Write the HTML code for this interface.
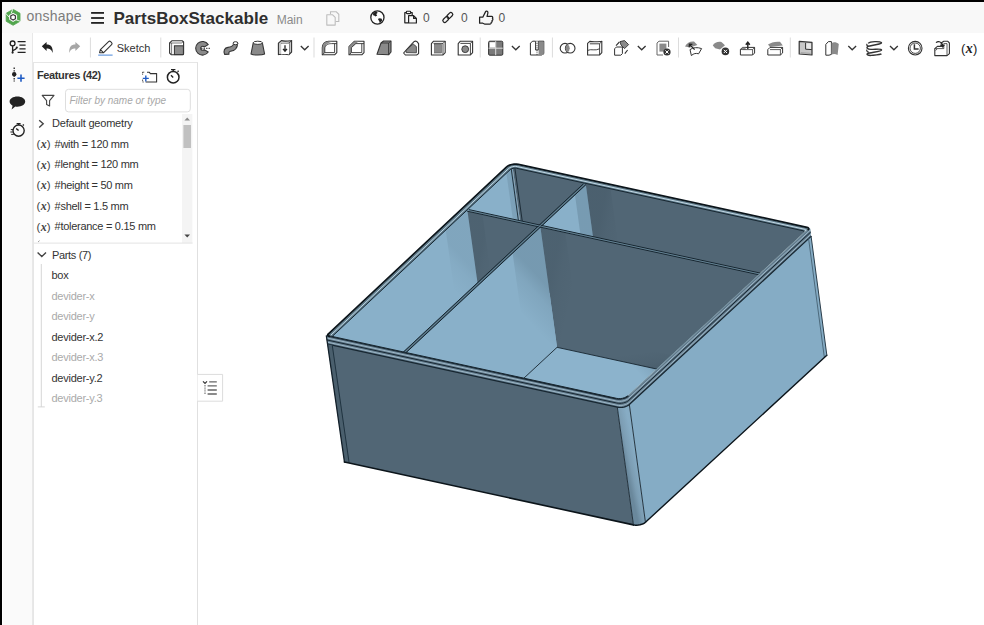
<!DOCTYPE html>
<html><head><meta charset="utf-8">
<style>
*{box-sizing:border-box;margin:0;padding:0}
html,body{width:984px;height:625px;overflow:hidden;background:#fff;font-family:"Liberation Sans",sans-serif;color:#333}
.abs{position:absolute}
#topbar{left:0;top:0;width:984px;height:2px;background:#000}
#leftbar{left:0;top:0;width:2px;height:625px;background:#000}
#header{left:2px;top:2px;width:982px;height:31px;background:#f8f8f8}
#rail{left:3px;top:33px;width:30px;height:592px;background:#fafafa;border-right:1px solid #e8e8e8}
#toolbar{left:33px;top:34px;width:951px;height:28px;background:#fff}
#panel{left:33px;top:62px;width:165px;height:563px;background:#fff;border-left:1px solid #e6e6e6;border-right:1px solid #e0e0e0;border-top:1px solid #e6e6e6}
.t{position:absolute;white-space:nowrap;line-height:1}
.sep{position:absolute;top:38px;width:1px;height:20px;background:#d8d8d8}
svg.ic{position:absolute;overflow:visible}
</style></head><body>
<div id="topbar" class="abs"></div>
<div id="header" class="abs"></div>
<div id="rail" class="abs"></div>
<div id="toolbar" class="abs"></div>
<div id="panel" class="abs"></div>
<div id="leftbar" class="abs"></div>
<div class="t" style="left:26.6px;top:8.75px;font-size:14px;font-weight:400;color:#7c7c7c;letter-spacing:0.2px;font-style:normal;">onshape</div>
<div class="t" style="left:113.4px;top:10.01px;font-size:17px;font-weight:700;color:#2e2e2e;letter-spacing:0.05px;font-style:normal;">PartsBoxStackable</div>
<div class="t" style="left:276.7px;top:13.54px;font-size:12px;font-weight:400;color:#8a8a8a;letter-spacing:0px;font-style:normal;">Main</div>
<div class="t" style="left:423.0px;top:12.14px;font-size:12px;font-weight:400;color:#555;letter-spacing:0px;font-style:normal;">0</div>
<div class="t" style="left:461.0px;top:12.14px;font-size:12px;font-weight:400;color:#555;letter-spacing:0px;font-style:normal;">0</div>
<div class="t" style="left:498.4px;top:12.14px;font-size:12px;font-weight:400;color:#555;letter-spacing:0px;font-style:normal;">0</div>

<div class="t" style="left:116.7px;top:42.59px;font-size:11px;font-weight:400;color:#333;letter-spacing:0px;font-style:normal;">Sketch</div>
<div class="t" style="left:961.0px;top:41.60px;font-size:13px;font-weight:400;color:#222;letter-spacing:0.3px;font-style:normal;">(<span style="font-family:'Liberation Serif';font-style:italic;font-weight:700;font-size:14px">x</span>)</div>

<svg class="abs" style="left:0;top:0" width="984" height="625" viewBox="0 0 984 625">
<polygon points="13.10,25.30 6.17,21.30 6.17,13.30 13.10,9.30 20.03,13.30 20.03,21.30" fill="#52a64e" stroke="#52a64e" stroke-width="0.8" stroke-linejoin="round"/><polygon points="13.10,21.90 9.12,19.60 9.12,15.00 13.10,12.70 17.08,15.00 17.08,19.60" fill="#f8f8f8"/><path d="M13.1 8.4 L11.2 13.4 M20.6 21.4 L15.4 19.6 M5.6 13.2 L9.3 17.4" stroke="#f8f8f8" stroke-width="0.9"/><polygon points="13.10,20.00 10.76,18.65 10.76,15.95 13.10,14.60 15.44,15.95 15.44,18.65" fill="#fff" stroke="#3a3a3a" stroke-width="1.2"/><rect x="91.1" y="12" width="12.9" height="1.8" fill="#222"/><rect x="91.1" y="17.1" width="12.9" height="1.8" fill="#222"/><rect x="91.1" y="22" width="12.9" height="1.8" fill="#222"/><path d="M330.5 14 V11.8 H336.3 L338.8 14.3 V21.5 H335.5" fill="none" stroke="#bdbdbd" stroke-width="1.1"/><path d="M326.8 14.8 H332.6 L335.2 17.4 V25.1 H326.8 Z" fill="#f8f8f8" stroke="#bdbdbd" stroke-width="1.1" stroke-linejoin="round"/><circle cx="377.4" cy="17.5" r="6.6" fill="#fff" stroke="#222" stroke-width="1.3"/><path d="M373.2 12.9 C374.4 12 375.8 11.6 377 11.7 L377.6 12.9 L376.2 14.1 L377.2 15.5 L375.4 16.6 L374.2 15.6 L373 15.2 Z" fill="#222"/><path d="M378.8 18.2 L381.4 18.6 L382.4 20.2 C381.8 21.4 380.8 22.4 379.6 22.9 L379.2 21 L378 19.6 Z" fill="#222"/><path d="M408.2 22.8 H404.8 V12.6 H406.4 M410.6 12.6 H412.2 V15.2" fill="none" stroke="#222" stroke-width="1.2" stroke-linejoin="round"/><rect x="406.4" y="11.2" width="4.2" height="2.4" rx="0.6" fill="#f8f8f8" stroke="#222" stroke-width="1.1"/><path d="M408.6 15.6 H413.6 L416.4 18.4 V23 H408.6 Z M413.6 15.6 V18.4 H416.4" fill="#f8f8f8" stroke="#222" stroke-width="1.2" stroke-linejoin="round"/><g transform="rotate(-45 447.8 17.5)"><rect x="441.6" y="15.6" width="6.8" height="3.8" rx="1.9" fill="none" stroke="#222" stroke-width="1.25"/><rect x="447.2" y="15.6" width="6.8" height="3.8" rx="1.9" fill="none" stroke="#222" stroke-width="1.25"/></g><path d="M479.6 17.2 H482.8 L485.6 11.6 C486 10.8 487.6 10.9 487.9 12.2 C488.1 13.4 487.3 15.4 487 16.3 H491.6 C492.8 16.4 493 17.6 492.4 18.3 C493.2 19 492.9 20.2 492 20.5 C492.4 21.3 492 22.3 491.2 22.4 C491.4 23.5 490.6 24 489.8 24 H484.5 L482.8 23.2 H479.6 Z" fill="none" stroke="#222" stroke-width="1.25" stroke-linejoin="round"/>
<rect x="89.9" y="37.5" width="1" height="20" fill="#dcdcdc"/><rect x="160.3" y="37.5" width="1" height="20" fill="#dcdcdc"/><rect x="313.5" y="37.5" width="1" height="20" fill="#dcdcdc"/><rect x="479.7" y="37.5" width="1" height="20" fill="#dcdcdc"/><rect x="551.9" y="37.5" width="1" height="20" fill="#dcdcdc"/><rect x="678.0" y="37.5" width="1" height="20" fill="#dcdcdc"/><rect x="789.8" y="37.5" width="1" height="20" fill="#dcdcdc"/><path d="M300.8 46 L304.7 49.8 L308.6 46" fill="none" stroke="#333" stroke-width="1.3"/><path d="M511.9 46 L515.8 49.8 L519.7 46" fill="none" stroke="#333" stroke-width="1.3"/><path d="M637.8 46 L641.7 49.8 L645.6 46" fill="none" stroke="#333" stroke-width="1.3"/><path d="M848.3 46 L852.2 49.8 L856.1 46" fill="none" stroke="#333" stroke-width="1.3"/><path d="M890.0 46 L893.9 49.8 L897.8 46" fill="none" stroke="#333" stroke-width="1.3"/><path d="M41.8 46.2 L46.6 41.9 V44.5 C50.8 44.5 53.2 47 52.7 53 C51.4 49.6 49.8 48.6 46.6 48.6 V51 Z" fill="#222"/><path d="M80.2 46.2 L75.4 41.9 V44.5 C71.2 44.5 68.8 47 69.3 53 C70.6 49.6 72.2 48.6 75.4 48.6 V51 Z" fill="#a6a6a6"/><path d="M99.6 52.6 L100.4 49.6 L108.6 41.6 C109.2 41 110 41 110.6 41.6 L111.6 42.6 C112.2 43.2 112.2 44 111.6 44.6 L103.4 52.8 Z M100.4 49.6 L103.4 52.6" fill="none" stroke="#333" stroke-width="1.1" stroke-linejoin="round"/><rect x="98.2" y="54.6" width="14.4" height="1" fill="#4a86d8"/><path d="M169.6 43 L171.8 40.8 H182.4 L183.6 42 V53.6 L182.4 54.8 H171.4 L169.6 53 Z" fill="#fff" stroke="#333" stroke-width="1.1" stroke-linejoin="round"/><path d="M169.8 43 H181.8 L183.4 41.2 M171.6 43 V54.6" fill="none" stroke="#444" stroke-width="0.7"/><rect x="174.4" y="45.8" width="9" height="8.8" fill="#8c8c8c" stroke="#333" stroke-width="1"/><path d="M208.2 44.6 A6.8 6.8 0 1 0 208.2 52 L204.2 49.6 A2 2 0 1 1 204.2 47 Z" fill="#8a8a8a" stroke="#333" stroke-width="1.1" stroke-linejoin="round"/><path d="M201 48.3 H210.6" stroke="#333" stroke-width="1" stroke-dasharray="1.5 1"/><path d="M224.6 54.4 C223.2 50.8 224.4 47.8 228 47.4 C231.2 47 232.6 46.4 233.4 44.4 L237.6 43.4 C237.4 48 235 50.6 230.6 51.2 C229 51.4 228.6 52.6 229 54.2 Z" fill="#8a8a8a" stroke="#333" stroke-width="1.1" stroke-linejoin="round"/><ellipse cx="235.5" cy="43.2" rx="2.4" ry="1.5" fill="#fff" stroke="#333" stroke-width="1"/><path d="M253.2 43 L251 54 C253.6 55.4 262 55.4 264.6 54 L262.4 43 Z" fill="#8a8a8a" stroke="#333" stroke-width="1.1" stroke-linejoin="round"/><ellipse cx="257.8" cy="42.8" rx="4.6" ry="1.6" fill="#fff" stroke="#333" stroke-width="1"/><path d="M278.4 43.2 L281.4 40.6 C284 41.6 286.6 41.2 291.6 40.6 V52 L289 54.6 C286 53.8 282.4 54.2 278.4 54.6 Z" fill="#c8c8c8" stroke="#333" stroke-width="1.1" stroke-linejoin="round"/><path d="M281 43.4 C283.6 44 286.4 43.6 289 43.2 V54.4 M289 43.2 L291.6 40.6" fill="none" stroke="#333" stroke-width="0.9"/><path d="M281.2 43.6 H289 V54.4 C286 53.8 283.4 54 281.2 54.4 Z" fill="#fff"/><path d="M285 45.2 V50.6 M283 48.8 L285 51.2 L287 48.8" fill="none" stroke="#222" stroke-width="1.3"/><path d="M322.3 54.8 V47.6 C322.3 44 325 41.3 328.6 41.3 H336.8 V52.6 L334.6 54.8 Z" fill="#fff" stroke="#333" stroke-width="1.1" stroke-linejoin="round"/><path d="M322.5 47.6 C322.5 44.2 325 41.5 328.6 41.5 H333 C329.4 42.2 325.8 43.8 324.8 47.8 V52.6 L322.5 54.6 Z" fill="#8c8c8c"/><path d="M324.8 52.6 V47.8 C325.8 44.4 328.6 43.6 331.6 43.6 H336.8 M324.8 52.6 H334.6 V43.6 M322.3 54.8 L324.8 52.6" fill="none" stroke="#333" stroke-width="0.9"/><path d="M349 54.8 V46.6 L354.3 41.3 H364 V52.6 L361.8 54.8 Z" fill="#fff" stroke="#333" stroke-width="1.1" stroke-linejoin="round"/><path d="M349.2 46.6 L354.3 41.5 H358.6 L351.4 47.6 V52.6 L349.2 54.6 Z" fill="#8c8c8c"/><path d="M351.4 52.6 V47.6 L355.8 43.6 H364 M351.4 52.6 H361.8 V43.6 M349 54.8 L351.4 52.6" fill="none" stroke="#333" stroke-width="0.9"/><path d="M377 54.2 L381 43 L383.6 41 H391 V52 L388.6 54.8 Z" fill="#8a8a8a" stroke="#333" stroke-width="1.1" stroke-linejoin="round"/><path d="M381 43 H388.6 V54.8 M388.6 43 L391 41" fill="none" stroke="#333" stroke-width="0.9"/><path d="M403.6 53 L406 50.4 L413 42.6 C414 41.4 416 41 417 41.6 L418.6 43.6 V53.6 L416.6 55 H405.4 Z" fill="#fff" stroke="#333" stroke-width="1.1" stroke-linejoin="round"/><path d="M406 50.4 L413.2 44 L416.4 46.6 V52.8 L406.2 52.6 Z" fill="#8a8a8a" stroke="#333" stroke-width="0.8"/><path d="M431.4 43.6 L433.6 41.2 H445.2 V52.6 L443 55 H431.4 Z" fill="#fff" stroke="#333" stroke-width="1.1" stroke-linejoin="round"/><path d="M433.6 43.4 H443 V55 M443 43.4 L445.2 41.2" fill="none" stroke="#333" stroke-width="0.9"/><rect x="434.6" y="44.4" width="6.8" height="8.6" fill="#8a8a8a" stroke="#555" stroke-width="0.6"/><path d="M458.2 43.6 L460.4 41.2 H472.6 V52.6 L470.4 55 H458.2 Z" fill="#fff" stroke="#333" stroke-width="1.1" stroke-linejoin="round"/><path d="M460.4 43.4 H470.4 V55 M470.4 43.4 L472.6 41.2" fill="none" stroke="#333" stroke-width="0.9"/><circle cx="465.2" cy="49.2" r="3.4" fill="#8a8a8a" stroke="#333" stroke-width="0.9"/><rect x="488.6" y="41.2" width="14.2" height="14" rx="1.2" fill="#7a7a7a" stroke="#333" stroke-width="1"/><rect x="489.6" y="42.2" width="5.4" height="5.4" fill="#fff"/><path d="M495.7 41.2 V55.2 M488.6 48.2 H502.8" stroke="#ddd" stroke-width="1"/><path d="M530.4 43 L532.8 41.2 H535.6 V50 H538.4 V41.2 H543.8 V53.6 L541.6 55 H530.4 Z" fill="#fff" stroke="#333" stroke-width="1" stroke-linejoin="round"/><path d="M538.6 42 H543.6 V55 H538.6 Z" fill="#8a8a8a"/><path d="M537 40.6 V56" stroke="#333" stroke-width="0.8" stroke-dasharray="1.2 1"/><circle cx="565" cy="48.2" r="4.8" fill="#fff" stroke="#333" stroke-width="1.1"/><circle cx="570.2" cy="48.2" r="4.8" fill="#fff" stroke="#333" stroke-width="1.1"/><path d="M567.6 44.2 A4.8 4.8 0 0 1 567.6 52.2 A4.8 4.8 0 0 1 567.6 44.2 Z" fill="#8a8a8a"/><path d="M587.6 43.4 L589.8 41.4 C593 42.2 597 41.8 601.8 41.4 V52.6 L599.6 55 H587.6 Z" fill="#fff" stroke="#333" stroke-width="1.1" stroke-linejoin="round"/><path d="M589.8 43.8 H599.6 V55 M599.6 43.8 L601.8 41.4 M587.8 50.4 C591 48.6 595 51.2 599.6 48.8" fill="none" stroke="#333" stroke-width="0.9"/><path d="M614.6 48.8 L616.4 47 H622.4 V53.6 L620.8 55.2 H614.6 Z" fill="#fff" stroke="#333" stroke-width="1" stroke-linejoin="round"/><path d="M620 41.6 L624.6 40.6 L628.6 44.6 L624.6 48.6 L621 45 Z" fill="#8a8a8a" stroke="#333" stroke-width="0.9"/><path d="M616 45.6 L619.4 42 M627.6 50 L624.8 53.6" stroke="#333" stroke-width="1.1"/><path d="M657 43 L659 41.2 H668.6 V47 M657 43 V55 H663" fill="#fff" stroke="#666" stroke-width="1" stroke-linejoin="round"/><rect x="659.4" y="43.6" width="7" height="8" fill="#8a8a8a"/><circle cx="667" cy="52" r="3.6" fill="#333"/><path d="M665.4 50.4 L668.6 53.6 M668.6 50.4 L665.4 53.6" stroke="#fff" stroke-width="1"/><path d="M685 46.4 C687 43 690 41.2 694 41.6 L697.4 45 L690 47.6 Z" fill="#8a8a8a"/><path d="M690 49.6 C693 47.4 697.4 47 701.6 48.6 L698.6 53.8 C696 53 693.6 53.4 691.4 55.6 Z" fill="#fff" stroke="#333" stroke-width="1" stroke-linejoin="round"/><path d="M689.6 44.6 L694.6 49.6 M689.2 47.2 L689.4 44.2 L692.4 44.4" fill="none" stroke="#222" stroke-width="1.2"/><path d="M712.8 45.6 C714.4 42.6 717.6 41.4 721.4 42 L725 45.2 L720 49.4 L715.2 48.2 Z" fill="#8a8a8a"/><circle cx="725.4" cy="51.4" r="3.8" fill="#333"/><path d="M723.8 49.8 L727 53 M727 49.8 L723.8 53" stroke="#fff" stroke-width="1"/><path d="M740.4 49.4 L742.6 47.4 H754.6 V53 L752.6 55 H740.4 Z" fill="#fff" stroke="#333" stroke-width="1" stroke-linejoin="round"/><path d="M740.6 49.4 L742.6 47.6 H745.6 V49.4 Z" fill="#8c8c8c"/><path d="M742.2 49.6 H752.6 V55 M752.6 49.6 L754.6 47.4 M740.4 49.4 H742.2" fill="none" stroke="#333" stroke-width="0.8"/><path d="M747.8 49 V42.6 M745.8 44.8 L747.8 42.2 L749.8 44.8" fill="none" stroke="#222" stroke-width="1.4"/><path d="M768 44.4 C771 42.6 775 41.2 780 41.8 L782.8 45.4 L770 47 Z" fill="#8a8a8a"/><path d="M767.8 49.6 L770 47.4 H782.6 V53 L780.4 55 H767.8 Z" fill="#fff" stroke="#333" stroke-width="1" stroke-linejoin="round"/><path d="M770 49.6 H780.4 V55 M780.4 49.6 L782.6 47.4" fill="none" stroke="#333" stroke-width="0.8"/><path d="M799.2 41.4 L812 42.4 V55 L799.2 54 Z" fill="#c8c8c8" stroke="#333" stroke-width="1.2" stroke-linejoin="round"/><path d="M805.6 43.2 L811 43.6 V49.6 L805.6 49.2 Z" fill="#e8e8e8"/><path d="M805.6 42.8 V49.2 L811.8 49.6" fill="none" stroke="#333" stroke-width="1"/><path d="M800.8 52.6 L810.6 53.4" fill="none" stroke="#999" stroke-width="0.8"/><path d="M825.8 44.4 L828.4 41.6 H831.4 V54.4 L829 55.2 H825.8 Z" fill="#fff" stroke="#333" stroke-width="1" stroke-linejoin="round"/><path d="M831.6 43 C834 41.6 836.8 42.4 838.8 44 L837.6 55 C835.6 53.8 833.4 53.6 831.4 54.6 Z" fill="#8a8a8a"/><path d="M868.2 43.4 C870 41.2 880 41.2 881.4 42.6 C882.6 44 871 45.4 868 46.4 C866 47.4 867 49.4 871 49.4 C876 49.4 881.4 48.4 881.6 50 C881.8 51.6 870 52.4 867.4 53.6 C866.2 54.4 868 55.6 871.2 55.4 C876 55 880.6 54.8 881.4 53.8" fill="none" stroke="#333" stroke-width="1.4"/><path d="M867.2 43.8 C866 45 867.2 45.8 868.6 46 M867 49.6 C866 51 867.6 52 869 52.2" fill="none" stroke="#333" stroke-width="1.2"/><circle cx="915.2" cy="48.2" r="6.8" fill="#fff" stroke="#333" stroke-width="1.1"/><circle cx="915.2" cy="48.2" r="5.2" fill="none" stroke="#333" stroke-width="0.9"/><path d="M914.4 44.2 V49 H918.6" fill="none" stroke="#333" stroke-width="1.5"/><path d="M934.8 48.6 L937.4 46.4 H941.2 V43 L943.8 41.2 H947.6 L949.4 43 V53.6 L947 55.6 H934.8 Z" fill="#fff" stroke="#333" stroke-width="1.1" stroke-linejoin="round"/><path d="M937.4 48.6 H943.8 V43.6 H947 V55.6 M934.8 48.6 H937.4 L935.6 50.6" fill="none" stroke="#333" stroke-width="0.8"/><path d="M936 42.6 C938 41 941 41.4 942.4 44.2 L942.6 46.6 M940.6 45 L942.6 46.8 L944.4 44.8" fill="none" stroke="#222" stroke-width="1.2"/>
<circle cx="12.6" cy="43.4" r="2.4" fill="none" stroke="#222" stroke-width="1.3"/><path d="M12.6 45.8 V52.6 M12.6 50.6 C14 50 16 49.4 16.6 48" fill="none" stroke="#222" stroke-width="1.3"/><circle cx="12.6" cy="52.6" r="1.1" fill="#222"/><circle cx="16.8" cy="47.6" r="1.1" fill="#222"/><path d="M17.6 41.6 H25.6 M19.4 45.2 H25.6 M19.4 48.8 H25.6 M17.6 52.4 H25.6" stroke="#222" stroke-width="1.3"/><path d="M14.2 67.6 V81.6" stroke="#222" stroke-width="1.3" stroke-dasharray="1.4 1.2"/><circle cx="14.2" cy="74.2" r="2.2" fill="#222"/><path d="M17.4 78.2 H24.6 M21 74.6 V81.8" stroke="#1f5bc4" stroke-width="1.6"/><path d="M17.4 96.4 C21.8 96.4 25.2 98.6 25.2 101.6 C25.2 104.6 21.8 106.8 17.4 106.8 C16.6 106.8 16 106.7 15.3 106.6 L11.6 109.6 L12.6 105.8 C10.8 104.8 9.6 103.3 9.6 101.6 C9.6 98.6 13 96.4 17.4 96.4 Z" fill="#222"/><circle cx="18.6" cy="130.6" r="5.6" fill="none" stroke="#222" stroke-width="1.4"/><path d="M16.6 123.6 H20.6 M18.6 123.8 V125 M18.6 130.6 L16.2 128.4 M22.8 125.6 L23.8 124.6" stroke="#222" stroke-width="1.4"/><path d="M10.8 129.6 H13 M10.4 132 H12.8 M11.2 134.4 H13.8" stroke="#222" stroke-width="1"/>
<path d="M147 72.2 H149.2 L150.4 73.6 H156.6 V82 H145.6" fill="none" stroke="#333" stroke-width="1.1" stroke-linejoin="round"/><path d="M142.6 72.2 H145 M142.6 72.2 V75 M142.6 79.6 V82 H144" fill="none" stroke="#333" stroke-width="1" stroke-dasharray="1.2 1"/><path d="M142.8 78.4 H148.8 M145.8 75.4 V81.4" stroke="#1f5bc4" stroke-width="1.4"/><circle cx="173.2" cy="77.2" r="5.8" fill="none" stroke="#222" stroke-width="1.5"/><path d="M171 69.6 H175.4 M173.2 69.8 V71.4 M173.2 77.4 L171 75.2 M177.6 71.8 L178.6 70.8" stroke="#222" stroke-width="1.4"/><path d="M42.2 95.4 H54 L49.6 100.6 V106 L46.6 104.6 V100.6 Z" fill="none" stroke="#444" stroke-width="1.1" stroke-linejoin="round"/><rect x="65.5" y="89.3" width="124.8" height="22.6" rx="3" fill="#fff" stroke="#dedede" stroke-width="1"/><path d="M39.2 120.2 L43.2 123.8 L39.2 127.4" fill="none" stroke="#444" stroke-width="1.4"/><rect x="182" y="114" width="10.4" height="129" fill="#f4f4f4"/><rect x="183.4" y="125" width="7.6" height="23" fill="#c1c1c1"/><path d="M184.4 120.6 L187.2 117.6 L190 120.6 Z" fill="#8a8a8a"/><path d="M184.4 234.4 L187.2 237.4 L190 234.4 Z" fill="#444"/><path d="M38 242 L39.6 240.6" stroke="#888" stroke-width="0.8"/><rect x="34" y="242.6" width="158.6" height="1" fill="#e3e3e3"/><path d="M37.6 252.4 L41.8 256.6 L46 252.4" fill="none" stroke="#444" stroke-width="1.4"/><rect x="40.8" y="264" width="1" height="143" fill="#d6d6d6"/><rect x="37.8" y="406.4" width="7" height="1" fill="#d6d6d6"/><path d="M197.5 374.4 H222.6 V401.2 H197.5" fill="#fff" stroke="#dcdcdc" stroke-width="1"/><path d="M203 381.4 L205 383.4 L207 381.4" fill="none" stroke="#333" stroke-width="1.2"/><path d="M205 385 V394.6" stroke="#777" stroke-width="1.2" stroke-dasharray="1 0.6"/><path d="M209.2 381.8 H216.8 M207.6 385.8 H216.8 M207.6 390 H216.8 M207.6 394 H216.8" stroke="#666" stroke-width="1.3"/>
</svg>

<div class="t" style="left:36.9px;top:69.99px;font-size:11px;font-weight:700;color:#333;letter-spacing:-0.35px;font-style:normal;">Features (42)</div>
<div class="t" style="left:69.4px;top:96.33px;font-size:10px;font-weight:400;color:#a8a8a8;letter-spacing:0px;font-style:italic;">Filter by name or type</div>
<div class="t" style="left:52.1px;top:118.29px;font-size:11px;font-weight:400;color:#333;letter-spacing:-0.2px;font-style:normal;">Default geometry</div>
<div class="t" style="left:36.6px;top:138.47px;font-size:11.5px;font-weight:400;color:#444;letter-spacing:0.2px;font-style:normal;">(<span style="font-family:'Liberation Serif';font-style:italic;font-weight:700;font-size:12px">x</span>)</div>
<div class="t" style="left:54.6px;top:138.89px;font-size:11px;font-weight:400;color:#333;letter-spacing:-0.28px;font-style:normal;">#with = 120 mm</div>
<div class="t" style="left:36.6px;top:159.07px;font-size:11.5px;font-weight:400;color:#444;letter-spacing:0.2px;font-style:normal;">(<span style="font-family:'Liberation Serif';font-style:italic;font-weight:700;font-size:12px">x</span>)</div>
<div class="t" style="left:54.6px;top:159.49px;font-size:11px;font-weight:400;color:#333;letter-spacing:-0.28px;font-style:normal;">#lenght = 120 mm</div>
<div class="t" style="left:36.6px;top:179.47px;font-size:11.5px;font-weight:400;color:#444;letter-spacing:0.2px;font-style:normal;">(<span style="font-family:'Liberation Serif';font-style:italic;font-weight:700;font-size:12px">x</span>)</div>
<div class="t" style="left:54.6px;top:179.89px;font-size:11px;font-weight:400;color:#333;letter-spacing:-0.28px;font-style:normal;">#height = 50 mm</div>
<div class="t" style="left:36.6px;top:200.47px;font-size:11.5px;font-weight:400;color:#444;letter-spacing:0.2px;font-style:normal;">(<span style="font-family:'Liberation Serif';font-style:italic;font-weight:700;font-size:12px">x</span>)</div>
<div class="t" style="left:54.6px;top:200.89px;font-size:11px;font-weight:400;color:#333;letter-spacing:-0.28px;font-style:normal;">#shell = 1.5 mm</div>
<div class="t" style="left:36.6px;top:220.87px;font-size:11.5px;font-weight:400;color:#444;letter-spacing:0.2px;font-style:normal;">(<span style="font-family:'Liberation Serif';font-style:italic;font-weight:700;font-size:12px">x</span>)</div>
<div class="t" style="left:54.6px;top:221.29px;font-size:11px;font-weight:400;color:#333;letter-spacing:-0.28px;font-style:normal;">#tolerance = 0.15 mm</div>
<div class="t" style="left:52.0px;top:249.89px;font-size:11px;font-weight:400;color:#333;letter-spacing:-0.35px;font-style:normal;">Parts (7)</div>
<div class="t" style="left:51.5px;top:270.29px;font-size:11px;font-weight:400;color:#333;letter-spacing:-0.25px;font-style:normal;">box</div>
<div class="t" style="left:51.5px;top:290.79px;font-size:11px;font-weight:400;color:#aaa;letter-spacing:-0.25px;font-style:normal;">devider-x</div>
<div class="t" style="left:51.5px;top:311.39px;font-size:11px;font-weight:400;color:#aaa;letter-spacing:-0.25px;font-style:normal;">devider-y</div>
<div class="t" style="left:51.5px;top:331.89px;font-size:11px;font-weight:400;color:#333;letter-spacing:-0.25px;font-style:normal;">devider-x.2</div>
<div class="t" style="left:51.5px;top:352.49px;font-size:11px;font-weight:400;color:#aaa;letter-spacing:-0.25px;font-style:normal;">devider-x.3</div>
<div class="t" style="left:51.5px;top:372.99px;font-size:11px;font-weight:400;color:#333;letter-spacing:-0.25px;font-style:normal;">devider-y.2</div>
<div class="t" style="left:51.5px;top:393.49px;font-size:11px;font-weight:400;color:#aaa;letter-spacing:-0.25px;font-style:normal;">devider-y.3</div>

<svg class="abs" style="left:0;top:0" width="984" height="625" viewBox="0 0 984 625">
<defs><linearGradient id="g1" gradientUnits="userSpaceOnUse" x1="624.80" y1="461.97" x2="636.84" y2="459.31"><stop offset="0" stop-color="#6a889c" stop-opacity="1"/><stop offset="0.4" stop-color="#7c9db3" stop-opacity="1"/><stop offset="1" stop-color="#87acc4" stop-opacity="1"/></linearGradient>
<linearGradient id="g2" gradientUnits="userSpaceOnUse" x1="521.23" y1="229.49" x2="515.04" y2="235.27"><stop offset="0" stop-color="#0a1a25" stop-opacity="0.1"/><stop offset="0.35" stop-color="#0a1a25" stop-opacity="0.045000000000000005"/><stop offset="1" stop-color="#0a1a25" stop-opacity="0"/></linearGradient>
<linearGradient id="g3" gradientUnits="userSpaceOnUse" x1="475.98" y1="271.78" x2="454.41" y2="291.94"><stop offset="0" stop-color="#0a1a25" stop-opacity="0.07"/><stop offset="0.35" stop-color="#0a1a25" stop-opacity="0.03150000000000001"/><stop offset="1" stop-color="#0a1a25" stop-opacity="0"/></linearGradient>
<linearGradient id="g4" gradientUnits="userSpaceOnUse" x1="594.15" y1="245.39" x2="619.04" y2="250.81"><stop offset="0" stop-color="#0a1a25" stop-opacity="0.08"/><stop offset="0.35" stop-color="#0a1a25" stop-opacity="0.036000000000000004"/><stop offset="1" stop-color="#0a1a25" stop-opacity="0"/></linearGradient>
<linearGradient id="g5" gradientUnits="userSpaceOnUse" x1="475.98" y1="271.78" x2="490.89" y2="275.03"><stop offset="0" stop-color="#0a1a25" stop-opacity="0.05"/><stop offset="0.35" stop-color="#0a1a25" stop-opacity="0.022500000000000003"/><stop offset="1" stop-color="#0a1a25" stop-opacity="0"/></linearGradient>
<linearGradient id="g6" gradientUnits="userSpaceOnUse" x1="594.15" y1="245.39" x2="583.30" y2="255.49"><stop offset="0" stop-color="#0a1a25" stop-opacity="0.14"/><stop offset="0.35" stop-color="#0a1a25" stop-opacity="0.06300000000000001"/><stop offset="1" stop-color="#0a1a25" stop-opacity="0"/></linearGradient>
<linearGradient id="g7" gradientUnits="userSpaceOnUse" x1="548.80" y1="287.64" x2="573.65" y2="293.06"><stop offset="0" stop-color="#0a1a25" stop-opacity="0.06"/><stop offset="0.35" stop-color="#0a1a25" stop-opacity="0.027"/><stop offset="1" stop-color="#0a1a25" stop-opacity="0"/></linearGradient>
<linearGradient id="g8" gradientUnits="userSpaceOnUse" x1="654.44" y1="368.53" x2="652.03" y2="350.78"><stop offset="0" stop-color="#0a1a25" stop-opacity="0.1"/><stop offset="0.35" stop-color="#0a1a25" stop-opacity="0.045000000000000005"/><stop offset="1" stop-color="#0a1a25" stop-opacity="0"/></linearGradient>
<linearGradient id="g9" gradientUnits="userSpaceOnUse" x1="548.80" y1="287.64" x2="521.01" y2="313.54"><stop offset="0" stop-color="#0a1a25" stop-opacity="0.15"/><stop offset="0.35" stop-color="#0a1a25" stop-opacity="0.0675"/><stop offset="1" stop-color="#0a1a25" stop-opacity="0"/></linearGradient>
<linearGradient id="g10" gradientUnits="userSpaceOnUse" x1="496.58" y1="403.53" x2="493.75" y2="383.30"><stop offset="0" stop-color="#0a1a25" stop-opacity="0.12"/><stop offset="0.35" stop-color="#0a1a25" stop-opacity="0.054"/><stop offset="1" stop-color="#0a1a25" stop-opacity="0"/></linearGradient>
<linearGradient id="g11" gradientUnits="userSpaceOnUse" x1="654.44" y1="368.53" x2="643.61" y2="378.56"><stop offset="0" stop-color="#0a1a25" stop-opacity="0.12"/><stop offset="0.35" stop-color="#0a1a25" stop-opacity="0.054"/><stop offset="1" stop-color="#0a1a25" stop-opacity="0"/></linearGradient>
<linearGradient id="g12" gradientUnits="userSpaceOnUse" x1="496.58" y1="403.53" x2="513.92" y2="407.30"><stop offset="0" stop-color="#0a1a25" stop-opacity="0.12"/><stop offset="0.35" stop-color="#0a1a25" stop-opacity="0.054"/><stop offset="1" stop-color="#0a1a25" stop-opacity="0"/></linearGradient>
</defs>
<polygon points="326.36,335.78 326.36,335.78 326.36,335.78 326.36,335.78 326.36,335.78 326.36,335.78 326.37,335.79 326.37,335.79 616.14,398.87 633.44,524.89 344.49,462.05 344.49,462.05 344.49,462.05 344.48,462.05 344.48,462.04 344.48,462.04 344.48,462.04 344.48,462.04" fill="#516675" />
<polygon points="809.99,227.96 809.99,227.96 809.99,227.96 809.99,227.96 809.99,227.96 809.99,227.96 809.98,227.97 809.98,227.97 628.20,396.20 645.46,522.25 826.83,355.26 826.84,355.26 826.84,355.26 826.84,355.26 826.84,355.26 826.84,355.26 826.84,355.25 826.84,355.25" fill="#85acc5" />
<polygon points="616.14,398.87 617.15,399.05 618.22,399.15 619.34,399.17 620.48,399.11 621.62,398.97 622.75,398.76 623.85,398.48 624.89,398.13 625.86,397.72 626.75,397.26 627.53,396.75 628.20,396.20 645.46,522.25 644.80,522.79 644.02,523.30 643.13,523.75 642.16,524.16 641.12,524.51 640.03,524.79 638.90,524.99 637.76,525.13 636.62,525.19 635.51,525.17 634.44,525.07 633.44,524.89" fill="url(#g1)" />
<clipPath id="cin"><polygon points="507.22,167.29 508.51,166.34 510.16,165.56 512.06,164.99 514.08,164.68 516.08,164.64 517.93,164.88 807.33,228.00 807.63,228.09 807.85,228.23 807.99,228.40 808.02,228.59 807.96,228.80 807.80,228.99 627.33,396.01 626.05,396.95 624.41,397.72 622.52,398.27 620.51,398.58 618.52,398.61 616.68,398.37 328.99,335.74 328.69,335.64 328.47,335.51 328.33,335.34 328.30,335.15 328.36,334.95 328.51,334.75"/></clipPath>
<g clip-path="url(#cin)">
<polygon points="512.36,165.64 332.16,334.49 349.72,456.98 529.54,289.35" fill="#89b0c9" />
<polygon points="512.36,165.64 804.12,229.26 820.48,352.74 529.54,289.35" fill="#516675" />
<polygon points="529.54,289.35 820.48,352.74 638.98,519.90 349.72,456.98" fill="#8cb3cc" />
<polygon points="512.36,165.64 506.17,171.44 523.36,295.11 529.54,289.35" fill="url(#g2)" />
<polyline points="510.97,166.94 528.15,290.65" fill="none" stroke="#172630" stroke-width="0.9" stroke-linejoin="round" stroke-linecap="round" />
<polyline points="514.61,166.13 531.78,289.84" fill="none" stroke="#172630" stroke-width="0.9" stroke-linejoin="round" stroke-linecap="round" />
<polygon points="467.06,208.08 445.47,228.31 462.79,351.58 484.34,331.49" fill="url(#g3)" />
<polygon points="585.39,181.56 610.31,187.00 627.22,310.63 602.36,305.22" fill="url(#g4)" />
<polygon points="467.51,211.24 537.69,226.54 554.33,346.73 484.34,331.49" fill="#516675" />
<polygon points="467.51,211.24 482.44,214.50 499.23,334.73 484.34,331.49" fill="url(#g5)" />
<polygon points="585.83,184.73 542.13,225.55 558.76,345.75 602.36,305.22" fill="#89b0c9" />
<polygon points="585.83,184.73 574.97,194.88 591.53,315.29 602.36,305.22" fill="url(#g6)" />
<polygon points="540.43,227.14 758.82,274.74 774.86,394.76 557.06,347.33" fill="#516675" />
<polygon points="540.43,227.14 565.31,232.56 581.87,352.73 557.06,347.33" fill="url(#g7)" />
<polygon points="554.60,329.56 772.49,377.02 774.86,394.76 557.06,347.33" fill="url(#g8)" />
<polygon points="540.43,227.14 405.21,353.43 422.12,472.73 557.06,347.33" fill="#89b0c9" />
<polygon points="540.43,227.14 512.60,253.12 529.29,373.13 557.06,347.33" fill="url(#g9)" />
<polygon points="554.25,327.03 419.27,452.58 422.12,472.73 557.06,347.33" fill="url(#g10)" />
<polygon points="557.06,347.33 774.86,394.76 763.98,404.78 546.25,357.37" fill="url(#g11)" />
<polygon points="557.06,347.33 422.12,472.73 439.42,476.49 574.43,351.11" fill="url(#g12)" />
<polygon points="469.21,209.65 760.53,273.16 758.82,274.74 467.51,211.24" fill="#45606f" />
<polygon points="583.09,184.13 585.83,184.73 405.21,353.43 402.48,352.84" fill="#45606f" />
<polyline points="469.21,209.65 760.53,273.16" fill="none" stroke="#172630" stroke-width="1.0" stroke-linejoin="round" stroke-linecap="round" />
<polyline points="467.51,211.24 758.82,274.74" fill="none" stroke="#172630" stroke-width="1.0" stroke-linejoin="round" stroke-linecap="round" />
<polyline points="583.09,184.13 402.48,352.84" fill="none" stroke="#172630" stroke-width="1.0" stroke-linejoin="round" stroke-linecap="round" />
<polyline points="585.83,184.73 405.21,353.43" fill="none" stroke="#172630" stroke-width="1.0" stroke-linejoin="round" stroke-linecap="round" />
<polyline points="468.36,210.45 759.68,273.95" fill="none" stroke="#8fb0c4" stroke-width="0.45" stroke-linejoin="round" stroke-linecap="round" />
<polyline points="584.46,184.43 403.84,353.13" fill="none" stroke="#8fb0c4" stroke-width="0.45" stroke-linejoin="round" stroke-linecap="round" />
<polyline points="422.12,472.73 557.06,347.33 774.86,394.76" fill="none" stroke="#172630" stroke-width="0.9" stroke-linejoin="round" stroke-linecap="round" />
</g>
<path d="M506.35,167.10 507.81,166.03 509.67,165.14 511.82,164.50 514.11,164.14 516.38,164.10 518.47,164.38 807.01,227.30 807.72,227.53 808.25,227.86 808.57,228.27 808.66,228.73 808.51,229.22 808.12,229.69 628.20,396.20 626.75,397.26 624.89,398.13 622.75,398.76 620.48,399.11 618.22,399.15 616.14,398.87 329.32,336.43 328.61,336.20 328.08,335.87 327.75,335.47 327.66,335.01 327.81,334.53 328.18,334.06Z M328.51,334.75 328.36,334.95 328.30,335.15 328.33,335.34 328.47,335.51 328.69,335.64 328.99,335.74 616.68,398.37 618.52,398.61 620.51,398.58 622.52,398.27 624.41,397.72 626.05,396.95 627.33,396.01 807.80,228.99 807.96,228.80 808.02,228.59 807.99,228.40 807.85,228.23 807.63,228.09 807.33,228.00 517.93,164.88 516.08,164.64 514.08,164.68 512.06,164.99 510.16,165.56 508.51,166.34 507.22,167.29Z" fill="#62808f" fill-rule="evenodd"/>
<polygon points="328.99,335.74 328.69,335.64 328.47,335.51 328.33,335.34 328.30,335.15 328.36,334.95 328.51,334.75 507.22,167.29 508.51,166.34 510.16,165.56 512.06,164.99 514.08,164.68 516.08,164.64 517.93,164.88 807.33,228.00 807.63,228.09 807.85,228.23 807.99,228.40 808.02,228.59 807.96,228.80 807.80,228.99 803.89,231.48 803.98,231.37 804.02,231.24 804.00,231.13 803.92,231.03 803.79,230.94 803.61,230.89 516.47,168.27 515.39,168.13 514.22,168.15 513.04,168.33 511.93,168.66 510.96,169.12 510.21,169.67 332.87,335.83 332.78,335.94 332.74,336.06 332.76,336.18 332.84,336.28 332.98,336.36 333.15,336.42" fill="#5d7a8a"/>
<polyline points="333.15,336.42 332.98,336.36 332.84,336.28 332.76,336.18 332.74,336.06 332.78,335.94 332.87,335.83 510.21,169.67 510.96,169.12 511.93,168.66 513.04,168.33 514.22,168.15 515.39,168.13 516.47,168.27 803.61,230.89 803.79,230.94 803.92,231.03 804.00,231.13 804.02,231.24 803.98,231.37 803.89,231.48" fill="none" stroke="#172630" stroke-width="1.0" stroke-linejoin="round" stroke-linecap="round" />
<polyline points="331.32,336.13 331.02,336.04 330.80,335.90 330.67,335.73 330.63,335.54 330.69,335.34 330.84,335.15 508.72,168.48 509.74,167.73 511.04,167.11 512.55,166.66 514.15,166.41 515.74,166.38 517.20,166.58 805.22,229.39 805.52,229.48 805.74,229.62 805.87,229.79 805.91,229.98 805.85,230.19 805.69,230.38" fill="none" stroke="#c4d8e4" stroke-width="1.0" stroke-linejoin="round" stroke-linecap="round" />
<polygon points="326.34,335.78 616.14,398.87 617.68,399.11 619.34,399.17 621.05,399.05 622.75,398.76 624.38,398.31 625.86,397.72 627.16,397.01 628.20,396.20 810.00,227.95 811.11,236.38 629.34,404.54 628.30,405.35 627.01,406.06 625.52,406.65 623.89,407.10 622.19,407.39 620.48,407.50 618.82,407.45 617.29,407.21 327.54,344.14" fill="#60798b"/>
<polyline points="326.66,337.95 616.44,401.04 617.98,401.27 619.63,401.33 621.35,401.22 623.05,400.93 624.67,400.48 626.16,399.89 627.45,399.18 628.50,398.37 810.29,230.14" fill="none" stroke="#a6bfce" stroke-width="0.9" stroke-linejoin="round" stroke-linecap="round" />
<polyline points="327.26,342.13 617.01,405.21 618.55,405.44 620.21,405.50 621.92,405.39 623.62,405.10 625.24,404.65 626.73,404.06 628.02,403.35 629.07,402.54 810.85,234.35" fill="none" stroke="#a6bfce" stroke-width="0.9" stroke-linejoin="round" stroke-linecap="round" />
<polyline points="326.94,339.96 616.71,403.04 618.25,403.28 619.91,403.34 621.62,403.22 623.32,402.93 624.95,402.48 626.43,401.89 627.73,401.18 628.77,400.37 810.56,232.16" fill="none" stroke="#172630" stroke-width="1.0" stroke-linejoin="round" stroke-linecap="round" />
<polyline points="327.54,344.14 617.29,407.21 618.82,407.45 620.48,407.50 622.19,407.39 623.89,407.10 625.52,406.65 627.01,406.06 628.30,405.35 629.34,404.54 811.11,236.38" fill="none" stroke="#172630" stroke-width="1.2" stroke-linejoin="round" stroke-linecap="round" />
<polyline points="627.33,396.01 626.05,396.95 624.41,397.72 622.52,398.27 620.51,398.58 618.52,398.61 616.68,398.37 328.99,335.74 328.69,335.64 328.47,335.51 328.33,335.34 328.30,335.15 328.36,334.95 328.51,334.75" fill="none" stroke="#172630" stroke-width="1.0" stroke-linejoin="round" stroke-linecap="round" />
<polyline points="628.20,396.20 626.75,397.26 624.89,398.13 622.75,398.76 620.48,399.11 618.22,399.15 616.14,398.87 329.32,336.43 328.61,336.20 328.08,335.87 327.75,335.47 327.66,335.01 327.81,334.53 328.18,334.06" fill="none" stroke="#172630" stroke-width="1.1" stroke-linejoin="round" stroke-linecap="round" />
<polyline points="329.32,336.43 328.61,336.20 328.08,335.87 327.75,335.47 327.66,335.01 327.81,334.53 328.18,334.06 506.35,167.10 507.81,166.03 509.67,165.14 511.82,164.50 514.11,164.14 516.38,164.10 518.47,164.38 807.01,227.30 807.72,227.53 808.25,227.86 808.57,228.27 808.66,228.73 808.51,229.22 808.12,229.69" fill="none" stroke="#0b141a" stroke-width="1.7" stroke-linejoin="round" stroke-linecap="round" />
<polygon points="327.54,344.14 332.25,345.16 349.05,462.31 344.47,462.04" fill="#4a5f6d" />
<polyline points="332.25,345.16 349.02,462.06" fill="none" stroke="#1f3340" stroke-width="1.0" stroke-linejoin="round" stroke-linecap="round" />
<polyline points="808.61,238.69 824.22,356.53" fill="none" stroke="#3d5868" stroke-width="0.8" stroke-linejoin="round" stroke-linecap="round" />
<polyline points="326.34,335.78 344.47,462.04" fill="none" stroke="#13202a" stroke-width="1.3" stroke-linejoin="round" stroke-linecap="round" />
<polyline points="344.47,462.04 344.48,462.04 344.48,462.04 344.48,462.04 344.48,462.04 344.48,462.05 344.49,462.05 344.49,462.05 344.49,462.05 633.44,524.89" fill="none" stroke="#0b141a" stroke-width="1.6" stroke-linejoin="round" stroke-linecap="round" />
<polyline points="645.46,522.25 826.83,355.26 826.84,355.26 826.84,355.26 826.84,355.26 826.84,355.26 826.84,355.26 826.84,355.25 826.84,355.25 826.85,355.25" fill="none" stroke="#0b141a" stroke-width="1.4" stroke-linejoin="round" stroke-linecap="round" />
<polyline points="826.85,355.25 811.11,236.38" fill="none" stroke="#2a3d4a" stroke-width="1.0" stroke-linejoin="round" stroke-linecap="round" />
<polyline points="633.44,524.89 634.97,525.13 636.62,525.19 638.33,525.07 640.03,524.79 641.65,524.34 643.13,523.75 644.42,523.05 645.46,522.25" fill="none" stroke="#0b141a" stroke-width="1.5" stroke-linejoin="round" stroke-linecap="round" />
<polyline points="617.29,407.21 633.44,524.89" fill="none" stroke="#172630" stroke-width="0.9" stroke-linejoin="round" stroke-linecap="round" />
<polyline points="629.34,404.54 645.46,522.25" fill="none" stroke="#172630" stroke-width="0.9" stroke-linejoin="round" stroke-linecap="round" />
</svg>

</body></html>
